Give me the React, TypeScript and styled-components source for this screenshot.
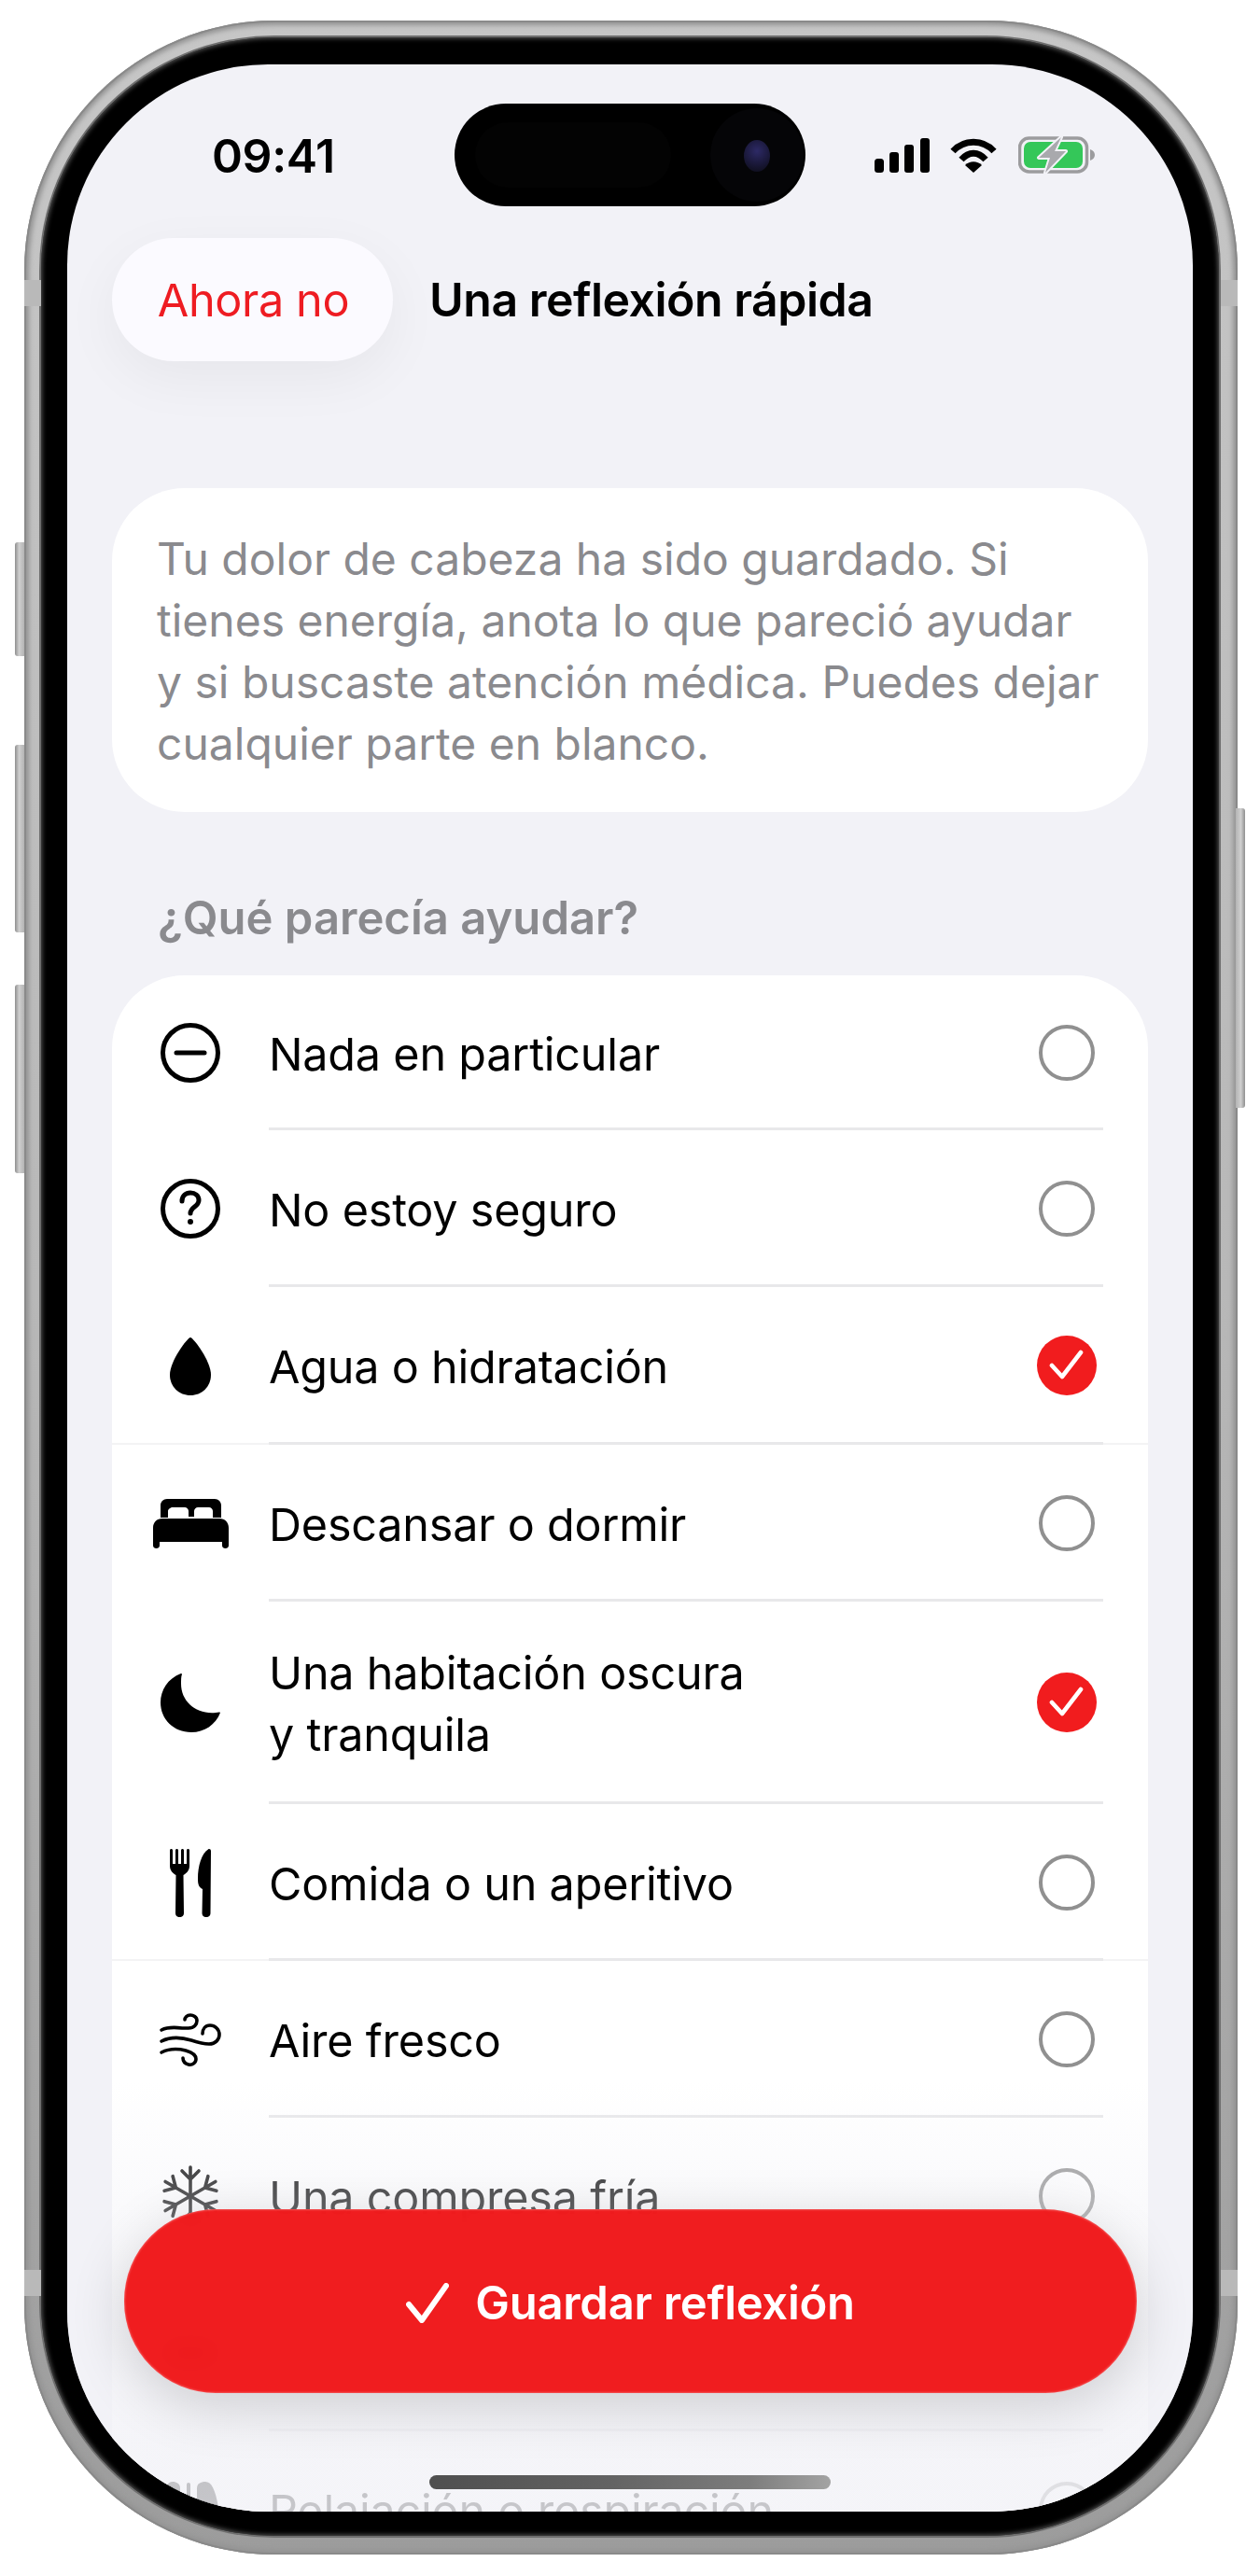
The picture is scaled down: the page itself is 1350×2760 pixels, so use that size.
import React from "react";
import styled, { createGlobalStyle } from "styled-components";

const GlobalStyle = createGlobalStyle`
  html, body {
    margin: 0;
    padding: 0;
    background: #fff;
    font-family: Inter, "Noto Sans", "Liberation Sans", sans-serif;
    -webkit-font-smoothing: antialiased;
  }
`;

const RED = "#f11c1e";
const BG = "#f2f2f7";

const Page = styled.div`
  width: 1350px;
  height: 2760px;
  box-sizing: border-box;
  padding: 22px 0 0 26px;
  overflow: hidden;
  background: #fff;
`;

const Frame = styled.div`
  position: relative;
  width: 1300px;
  height: 2715px;
  box-sizing: border-box;
  padding: 18px 20px 20px 18px;
  border-radius: 268px;
  background: linear-gradient(180deg, #c6c6c6 0%, #b8b8b8 50%, #9c9c9c 100%);
  box-shadow: inset 0 0 0 2px #8a8a8a, inset 0 0 5px 5px #949494;
`;

const SideButton = styled.div<{ $right?: boolean; $top: number; $height: number }>`
  position: absolute;
  top: ${(p) => p.$top}px;
  height: ${(p) => p.$height}px;
  width: 10px;
  ${(p) => (p.$right ? "right: -8px;" : "left: -10px;")}
  border-radius: ${(p) => (p.$right ? "0 3px 3px 0" : "3px 0 0 3px")};
  background: linear-gradient(
    ${(p) => (p.$right ? "270deg" : "90deg")},
    #8f8f8f 0%,
    #cfcfcf 45%,
    #b4b4b4 100%
  );
`;

const AntennaBand = styled.div<{ $right?: boolean; $top: number }>`
  position: absolute;
  top: ${(p) => p.$top}px;
  height: 28px;
  width: 18px;
  ${(p) => (p.$right ? "right: 0;" : "left: 0;")}
  background: #b9b9b9;
`;

const Bezel = styled.div`
  width: 100%;
  height: 100%;
  box-sizing: border-box;
  padding: 29px 28px 26px 28px;
  border-radius: 250px;
  background: #000;
  box-shadow: 0 0 0 2px #6e6e6e, inset 0 0 5px 1px #5a5a5a;
`;

const Screen = styled.div`
  position: relative;
  width: 1206px;
  height: 2622px;
  border-radius: 215px;
  overflow: hidden;
  background: ${BG};
`;

const StatusBar = styled.div`
  display: flex;
  align-items: center;
  height: 110px;
  padding: 42px 0 0 157px;
`;

const Time = styled.div`
  width: 258px;
  margin-left: -2px;
  padding-right: 2px;
  font-size: 50px;
  font-weight: 600;
  letter-spacing: -0.4px;
  color: #000;
  margin-top: 2px;
`;

const Island = styled.div`
  position: relative;
  width: 376px;
  height: 110px;
  border-radius: 55px;
  background: #000;
  overflow: hidden;
`;

const IslandSensor = styled.div`
  position: absolute;
  left: 22px;
  top: 20px;
  width: 210px;
  height: 70px;
  border-radius: 35px;
  background: #030303;
`;

const LensRing = styled.div`
  position: absolute;
  right: 2px;
  top: 5px;
  width: 100px;
  height: 100px;
  border-radius: 50%;
  background: #050507;
`;

const Lens = styled.div`
  position: absolute;
  right: 38px;
  top: 39px;
  width: 28px;
  height: 34px;
  border-radius: 50%;
  background: radial-gradient(circle at 50% 35%, #2d2a66 0%, #1d1b40 45%, #0b0b14 100%);
`;

const StatusIcons = styled.div`
  display: flex;
  align-items: center;
  margin-left: 74px;
`;

const NavRow = styled.div`
  display: flex;
  align-items: center;
  gap: 39px;
  margin-top: 34px;
  padding: 0 48px;
`;

const BackButton = styled.div`
  width: 301px;
  height: 132px;
  border-radius: 66px;
  display: flex;
  align-items: center;
  justify-content: center;
  padding-left: 2px;
  box-sizing: border-box;
  background: #fbfaff;
  color: #ee1c22;
  font-size: 48.6px;
  font-weight: 400;
  letter-spacing: -0.4px;
  box-shadow: 0 18px 60px rgba(0, 0, 0, 0.05);
`;

const Title = styled.div`
  font-size: 50px;
  font-weight: 600;
  letter-spacing: -0.5px;
  color: #000;
`;

const IntroCard = styled.div`
  margin: 136px 48px 0;
  padding: 43px 48px 40px;
  border-radius: 78px;
  background: #fff;
  color: #8a8a8e;
  font-size: 48px;
  line-height: 66px;
  letter-spacing: 0;
`;

const SectionTitle = styled.div`
  margin: 0;
  padding: 0 48px 0 49px;
  height: 175px;
  display: flex;
  align-items: center;
  font-size: 49px;
  font-weight: 600;
  color: #8a8a8e;
  margin-left: 48px;
  transform: translateY(26px);
`;

const List = styled.div`
  margin: 0 48px;
  border-radius: 78px 78px 0 0;
  background: #fff;
`;

const Row = styled.div<{ $height: number; $seam?: boolean }>`
  position: relative;
  display: flex;
  height: ${(p) => p.$height}px;
  ${(p) =>
    p.$seam &&
    `&::before {
      content: "";
      position: absolute;
      left: 0;
      right: 0;
      bottom: 0;
      height: 2px;
      background: #f3f3f4;
    }`}
`;

const IconSlot = styled.div`
  flex: 0 0 168px;
  display: flex;
  align-items: center;
  justify-content: center;
  color: #000;
  position: relative;
`;

const RowBody = styled.div<{ $plain?: boolean }>`
  flex: 1;
  display: flex;
  align-items: center;
  justify-content: space-between;
  margin-right: 48px;
  padding: 2px 9px 0 0;
  box-sizing: border-box;
  border-bottom: 3px solid ${(p) => (p.$plain ? "transparent" : "#e8e8ea")};
  position: relative;
`;

const RowLabel = styled.div`
  padding-top: 4px;
  font-size: 48.5px;
  line-height: 66px;
  letter-spacing: -0.2px;
  color: #000;
`;

const RadioOff = styled.div`
  width: 60px;
  height: 60px;
  box-sizing: border-box;
  border: 4.5px solid #909090;
  border-radius: 50%;
`;

const RadioOn = styled.div`
  width: 64px;
  height: 64px;
  margin-right: -2px;
  border-radius: 50%;
  background: ${RED};
  display: flex;
  align-items: center;
  justify-content: center;
`;

const BottomFade = styled.div`
  position: absolute;
  left: 0;
  right: 0;
  bottom: 0;
  height: 460px;
  pointer-events: none;
  background: linear-gradient(
    180deg,
    rgba(242, 242, 247, 0) 0%,
    rgba(242, 242, 247, 0.35) 25%,
    rgba(242, 242, 247, 0.75) 60%,
    rgba(242, 242, 247, 0.82) 100%
  );
`;

const SaveButton = styled.div`
  position: absolute;
  left: 61px;
  top: 2298px;
  width: 1085px;
  height: 197px;
  box-sizing: border-box;
  padding-top: 3px;
  border-radius: 98px;
  display: flex;
  align-items: center;
  justify-content: center;
  gap: 28px;
  background: rgba(240, 22, 24, 0.97);
  backdrop-filter: blur(10px);
  color: #fff;
  font-size: 49px;
  font-weight: 600;
  letter-spacing: -0.3px;
  box-shadow: 0 14px 60px rgba(0, 0, 0, 0.16), inset 0 0 2px 1px rgba(255, 255, 255, 0.25);
`;

const HomeIndicator = styled.div`
  position: absolute;
  left: 388px;
  top: 2583px;
  width: 430px;
  height: 15px;
  border-radius: 8px;
  background: linear-gradient(90deg, #4f4f4f 0%, #636363 45%, #7d7d7d 80%, #a3a3a3 100%);
`;

const SignalIcon = () => (
  <svg width="59" height="37" viewBox="0 0 59 37" fill="#000">
    <rect x="0" y="22" width="10" height="15" rx="3.5" />
    <rect x="16" y="15" width="10" height="22" rx="3" />
    <rect x="32" y="7" width="10" height="30" rx="3" />
    <rect x="49" y="0" width="10" height="37" rx="3" />
  </svg>
);

const WifiIcon = () => (
  <svg width="50" height="37" viewBox="0 0 50 37" style={{ marginLeft: 22 }}>
    <path d="M3 14C15 1 35 1 47 14" fill="none" stroke="#000" strokeWidth="7" />
    <path d="M12 23C20 14 30 14 38 23" fill="none" stroke="#000" strokeWidth="7" />
    <path d="M25 37L16 29C21 24 29 24 34 29Z" fill="#000" />
  </svg>
);

const BatteryIcon = () => (
  <svg width="82" height="40" viewBox="0 0 82 40" style={{ marginLeft: 23 }}>
    <rect x="1.5" y="2" width="72" height="36" rx="10" fill="none" stroke="#9c9c9e" strokeWidth="3.5" />
    <rect x="6" y="6" width="63" height="28" rx="7" fill="#34c759" />
    <path d="M77 14C80 15 82 17 82 20C82 23 80 25 77 26Z" fill="#9c9c9e" />
    <path d="M46 1L22 23H34L29 39L51 16H39Z" fill="#a9a9ad" stroke={BG} strokeWidth="4" strokeLinejoin="round" paintOrder="stroke" />
  </svg>
);

const MinusIcon = () => (
  <svg width="64" height="64" viewBox="0 0 64 64" fill="none" stroke="#000" strokeWidth="5" strokeLinecap="round">
    <circle cx="32" cy="32" r="29.5" />
    <path d="M17 32H47" />
  </svg>
);

const QuestionIcon = () => (
  <svg width="64" height="64" viewBox="0 0 64 64" fill="none" stroke="#000" strokeWidth="5" strokeLinecap="round">
    <circle cx="32" cy="32" r="29.5" />
    <path d="M23 24C23 18 27 15 32 15C37 15 41 18 41 23C41 30 32 30 32 37" />
    <circle cx="32" cy="46" r="3" fill="#000" stroke="none" />
  </svg>
);

const DropIcon = () => (
  <svg width="44" height="63" viewBox="0 0 44 63">
    <path d="M22 1C25 1 44 26 44 41C44 54 34 63 22 63C10 63 0 54 0 41C0 26 19 1 22 1Z" fill="#000" />
  </svg>
);

const BedIcon = () => (
  <svg width="81" height="53" viewBox="0 0 81 53" fill="#000">
    <path d="M8 20V7C8 3 11 0 15 0H66C70 0 73 3 73 7V20H64V13C64 11 62 9 60 9H48C46 9 44 11 44 13V19H38V13C38 11 36 9 34 9H21C19 9 16 11 16 13V20Z" />
    <path d="M10 21H71C77 21 81 25 81 31V50C81 54 74 54 74 50V46H7V50C7 54 0 54 0 50V31C0 25 4 21 10 21Z" />
  </svg>
);

const MoonIcon = () => (
  <svg width="64" height="63" viewBox="0 0 64 63">
    <path
      d="M22 0C8 5 0 18 0 31C0 49 14 63 33 63C47 63 59 55 64 42C63 41 61 42 59 42C38 44 22 30 22 11C22 7 22 3 23 1C23 0 22 0 22 0Z"
      fill="#000"
    />
  </svg>
);

const CutleryIcon = () => (
  <svg width="44" height="73" viewBox="0 0 44 73" fill="#000">
    <path d="M0 1.5V18C0 23 3 26 6.5 28L6 69C6 74.5 15 74.5 15 69L14.5 28C18 26 21 23 21 18V1.5C21 -0.5 18 -0.5 18 1.5V16H15V1.5C15 -0.5 12 -0.5 12 1.5V16H9V1.5C9 -0.5 6 -0.5 6 1.5V16H3V1.5C3 -0.5 0 -0.5 0 1.5Z" />
    <path d="M41 0.5C34 5 30 18 30 32C30 38 31 41 35 43L34.5 69C34.5 74.5 43.5 74.5 43.5 69L44 2.5C44 0 42 -0.5 41 0.5Z" />
  </svg>
);

const WindIcon = () => (
  <svg width="80" height="73" viewBox="15 10 80 73" fill="none" stroke="#000" strokeWidth="3.6" strokeLinecap="round">
    <path d="M24 36C30 33 38 33 46 34H53C59 34 62 30 62 26C62 22 58 20 55 20C51 20 49 23 49 25" />
    <path d="M24 48C34 43 46 44 56 47C62 49 68 51 75 51C82 51 86 46 86 41C86 35 81 31 76 31C71 31 68 35 68 40" />
    <path d="M24 60C32 56 42 56 50 58C57 60 61 63 61 67C61 71 57 74 53 73C49 72 47 69 47 66" />
  </svg>
);

const SnowIcon = () => (
  <svg width="64" height="68" viewBox="-32 -34 64 68" fill="none" stroke="#000" strokeWidth="3.6" strokeLinecap="round">
    {[0, 60, 120, 180, 240, 300].map((angle) => (
      <path key={angle} d="M0 0V-31M-9 -27L0 -18L9 -27" transform={`rotate(${angle})`} />
    ))}
  </svg>
);

const PillIcon = () => (
  <svg width="56" height="26" viewBox="0 0 56 26">
    <rect x="0" y="0" width="56" height="26" rx="13" fill="#000" />
  </svg>
);

const LungsIcon = () => (
  <svg width="66" height="60" viewBox="0 0 66 60" fill="#000">
    <path d="M22 7C22 2 18 0 14 0C6 0 4 12 0 40C-1 52 5 58 12 56C18 54 22 50 22 44Z" />
    <rect x="29" y="1" width="4" height="40" rx="2" />
    <path d="M40 7C40 2 44 0 49 0C57 0 61 12 65 40C66 52 60 58 53 56C46 54 40 50 40 44Z" />
  </svg>
);

const CheckSmall = () => (
  <svg width="38" height="34" viewBox="0 0 38 34" fill="none" stroke="#fff" strokeWidth="4.6" strokeLinecap="round" strokeLinejoin="round">
    <path d="M3 17L14 29L34 3" />
  </svg>
);

const CheckLarge = () => (
  <svg width="46" height="43" viewBox="0 0 46 43" fill="none" stroke="#fff" strokeWidth="6" strokeLinecap="round" strokeLinejoin="round">
    <path d="M3 23L17 40L43 3" />
  </svg>
);

interface Option {
  icon: React.ReactNode;
  label: React.ReactNode;
  height: number;
  checked?: boolean;
  seam?: boolean;
  plain?: boolean;
}

const options: Option[] = [
  { icon: <MinusIcon />, label: "Nada en particular", height: 166 },
  { icon: <QuestionIcon />, label: "No estoy seguro", height: 168 },
  { icon: <DropIcon />, label: "Agua o hidratación", height: 169, checked: true, seam: true },
  { icon: <BedIcon />, label: "Descansar o dormir", height: 168 },
  {
    icon: <MoonIcon />,
    label: (
      <>
        Una habitación oscura
        <br />y tranquila
      </>
    ),
    height: 217,
    checked: true,
  },
  { icon: <CutleryIcon />, label: "Comida o un aperitivo", height: 168, seam: true },
  { icon: <WindIcon />, label: "Aire fresco", height: 168 },
  { icon: <SnowIcon />, label: "Una compresa fría", height: 168 },
  { icon: <PillIcon />, label: "", height: 168 },
  { icon: <LungsIcon />, label: "Relajación o respiración", height: 168, plain: true },
];

export default function App() {
  return (
    <>
      <GlobalStyle />
      <Page>
        <Frame>
          <SideButton $top={559} $height={122} />
          <SideButton $top={776} $height={201} />
          <SideButton $top={1033} $height={202} />
          <SideButton $right $top={844} $height={321} />
          <AntennaBand $top={278} />
          <AntennaBand $top={2410} />
          <AntennaBand $right $top={278} />
          <AntennaBand $right $top={2410} />
          <Bezel>
            <Screen>
              <StatusBar>
                <Time>09:41</Time>
                <Island>
                  <IslandSensor />
                  <LensRing />
                  <Lens />
                </Island>
                <StatusIcons>
                  <SignalIcon />
                  <WifiIcon />
                  <BatteryIcon />
                </StatusIcons>
              </StatusBar>

              <NavRow>
                <BackButton>Ahora no</BackButton>
                <Title>Una reflexión rápida</Title>
              </NavRow>

              <IntroCard>
                Tu dolor de cabeza ha sido guardado. Si
                <br />
                tienes energía, anota lo que pareció ayudar
                <br />y si buscaste atención médica. Puedes dejar
                <br />
                cualquier parte en blanco.
              </IntroCard>

              <SectionTitle>¿Qué parecía ayudar?</SectionTitle>

              <List>
                {options.map((option, i) => (
                  <Row key={i} $height={option.height} $seam={option.seam}>
                    <IconSlot>{option.icon}</IconSlot>
                    <RowBody $plain={option.plain}>
                      <RowLabel>{option.label}</RowLabel>
                      {option.checked ? (
                        <RadioOn>
                          <CheckSmall />
                        </RadioOn>
                      ) : (
                        <RadioOff />
                      )}
                    </RowBody>
                  </Row>
                ))}
              </List>

              <BottomFade />
              <SaveButton>
                <CheckLarge />
                Guardar reflexión
              </SaveButton>
              <HomeIndicator />
            </Screen>
          </Bezel>
        </Frame>
      </Page>
    </>
  );
}
